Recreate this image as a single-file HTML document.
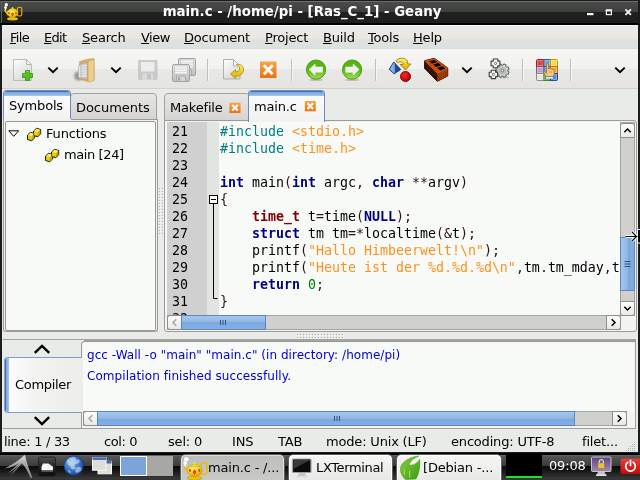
<!DOCTYPE html>
<html><head><meta charset="utf-8"><title>main.c - /home/pi - [Ras_C_1] - Geany</title>
<style>
*{box-sizing:border-box;margin:0;padding:0}
html,body{width:640px;height:480px;overflow:hidden;background:#1c1c1c}
body{position:relative;font-family:"DejaVu Sans","Liberation Sans",sans-serif;font-size:13px;color:#000;line-height:16px}
#root{position:absolute;left:0;top:0;width:640px;height:480px;will-change:transform;overflow:hidden;background:#1c1c1c}
.abs,#root div,#root span.p,#root svg{position:absolute}
.ui{white-space:pre;letter-spacing:-0.18px}
#title{left:0;top:0;width:640px;height:25px;background:linear-gradient(#1c1c1c 0,#1c1c1c 1px,#6c6e6c 1px,#6c6e6c 2px,#4b4d4b 2px,#3d3f3d 12px,#202020 12px,#1e1e1e 23px,#000 23px)}
#title .t{left:0;width:604px;top:4px;text-align:center;color:#fff;font-weight:bold;white-space:pre;font-size:13.333px}
#win{left:2px;top:25px;width:636px;height:427px;background:#e9ebe8}
#menubar{left:2px;top:25px;width:636px;height:24px;background:linear-gradient(#f7f7f7 0,#f7f7f7 1px,#e9e9e9 1px,#e9e9e9 7px,#ebe8e2 8px,#ebe5e1 14px,#dfe3df 14px,#dde1dd 23px,#d8dbd7 24px)}
#menubar span{position:absolute;top:5px}
u{text-decoration:underline;text-underline-offset:1px}
#toolbar{left:2px;top:49px;width:636px;height:40px;background:linear-gradient(#f6f6f5 0,#f1f1ef 20px,#e8e8e6 20px,#e6e4e1 39px,#d2d1ce 39px)}
.mono{font-family:"DejaVu Sans Mono","Liberation Mono",monospace;font-size:13.29px;white-space:pre}
.ln{left:0;width:480px;height:17px;line-height:17px}
.ln i{position:absolute;left:6px;font-style:normal;color:#000}
.ln b{font-weight:bold}
.ln s{position:absolute;left:54px;text-decoration:none}
.pp{color:#007f7f}.st{color:#ff901e}.kw{color:#00007f;font-weight:bold}.ty{color:#7f0000;font-weight:bold}.nu{color:#007f00}.br{color:#301010}
#status span{position:absolute;top:3px}
</style></head><body><div id="root">
<div id="title"><div class="t">main.c - /home/pi - [Ras_C_1] - Geany</div></div>
<div style="left:1px;top:1px;width:1px;height:22px;background:#5e605e"></div><div style="left:638px;top:0;width:2px;height:24px;background:#1a1a1a"></div><div id="win"></div>
<div id="menubar" class="ui"><span style="left:8px;letter-spacing:-0.7px"><u>F</u>ile</span><span style="left:42px;letter-spacing:-0.7px"><u>E</u>dit</span><span style="left:80px"><u>S</u>earch</span><span style="left:139px;letter-spacing:-0.5px"><u>V</u>iew</span><span style="left:182px"><u>D</u>ocument</span><span style="left:263px"><u>P</u>roject</span><span style="left:321px"><u>B</u>uild</span><span style="left:366px"><u>T</u>ools</span><span style="left:411px"><u>H</u>elp</span></div>
<div id="toolbar"></div>
<svg style="left:0;top:49px" width="640" height="40" viewBox="0 49 640 40">
<defs>
<linearGradient id="gpage" x1="0" y1="0" x2="0.6" y2="1"><stop offset="0" stop-color="#fefefe"/><stop offset="1" stop-color="#d8d8d8"/></linearGradient>
<linearGradient id="gor" x1="0" y1="0" x2="0" y2="1"><stop offset="0" stop-color="#f9a64a"/><stop offset="1" stop-color="#ef6f0c"/></linearGradient>
<linearGradient id="ggr" x1="0" y1="0" x2="0" y2="1"><stop offset="0" stop-color="#58b012"/><stop offset="0.55" stop-color="#5cba14"/><stop offset="1" stop-color="#a6de5a"/></linearGradient>
<linearGradient id="gfl" x1="0" y1="0" x2="0" y2="1"><stop offset="0" stop-color="#ececec"/><stop offset="1" stop-color="#bdbdbd"/></linearGradient>
<radialGradient id="gred" cx="0.4" cy="0.35" r="0.7"><stop offset="0" stop-color="#f82828"/><stop offset="1" stop-color="#b00004"/></radialGradient>
<linearGradient id="gyl" x1="0" y1="0" x2="0" y2="1"><stop offset="0" stop-color="#fff06a"/><stop offset="1" stop-color="#d8a800"/></linearGradient>
<filter id="blur1" x="-50%" y="-50%" width="200%" height="200%"><feGaussianBlur stdDeviation="0.9"/></filter><g id="chev"><polyline points="0.3,0.6 5,5.2 9.700,0.600" fill="none" stroke="#000" stroke-width="2" stroke-linecap="butt" stroke-linejoin="miter"/></g>
<g id="arrc"><ellipse cx="0" cy="10.3" rx="7" ry="1.2" fill="#000" opacity="0.18"/><circle cx="0" cy="0" r="9.6" fill="url(#ggr)" stroke="#4a9c10" stroke-width="1"/><path d="M-7,0 L-1,-5.6 V-2.6 H6.4 V2.6 H-1 V5.6 Z" fill="#f0f0ee" stroke="#fff" stroke-width="0.5" stroke-linejoin="round"/></g>
<g id="floppy"><rect x="0.5" y="0.5" width="17" height="17" rx="1.5" fill="url(#gfl)" stroke="#a2a2a2"/><rect x="2.5" y="2" width="13" height="8" fill="#f4f4f4" stroke="#b5b5b5" stroke-width="0.6"/><path d="M3,5h12M3,7.5h12" stroke="#cfcfcf" stroke-width="0.7"/><rect x="4.5" y="12" width="9" height="5.5" fill="#d6d6d6" stroke="#9a9a9a" stroke-width="0.7"/><rect x="6" y="13.3" width="2.2" height="3.4" fill="#a4a4a4"/></g>
</defs>
<!-- new -->
<path d="M13.500,59.500h13l5,5v16h-18z" fill="url(#gpage)" stroke="#bcbcbc"/>
<path d="M26.500,59.500v5h5z" fill="#f6f6f6" stroke="#b4b4b4" stroke-linejoin="round"/>
<path d="M25.500,70.500h4v3h3v4h-3v3h-4v-3h-3v-4h3z" fill="#56bc26" stroke="#40a018" stroke-width="1"/>
<path d="M26.500,71.500h2M23.500,74.500h2" stroke="#8edc60" stroke-width="1"/>
<use href="#chev" x="48" y="67"/>
<!-- open folder -->
<ellipse cx="78.500" cy="76" rx="4.300" ry="4.500" fill="#5c5c5c" opacity="0.600" filter="url(#blur1)"/>
<path d="M79.500,61.500l8,-2.300l6.500,-0.700v21.500l-6.500,1.500l-8,-2.500z" fill="#d6b062" stroke="#c09a4c" stroke-width="0.500"/>
<path d="M79.800,64.300l7.700,-1.900v17l-7.700,-1.800z" fill="#cdcdcd" stroke="#9c9c9c" stroke-width="0.600"/>
<path d="M81.200,66.400l5.300,-1M81.200,68.900l5.300,-1M81.200,71.400l5.300,-1M81.200,73.900l5.300,-1M81.200,76.400l5.300,-1" stroke="#f2f2f2" stroke-width="0.900"/>
<path d="M78.500,65.800l2.300,-0.400v12.600l-2.300,-0.500z" fill="#e4e4e4" stroke="#a8a8a8" stroke-width="0.500"/>
<path d="M88,61.500l6,-2.500v21.500l-6,1.500z" fill="#ecd08c" stroke="#cfa654" stroke-width="0.800"/>
<use href="#chev" x="111" y="67"/>
<!-- save disabled -->
<g opacity="0.9"><rect x="138" y="60" width="19.500" height="20" rx="1" fill="#c6c6c6"/><rect x="141" y="62" width="13.500" height="9.500" fill="#ededed"/><rect x="142.500" y="73.500" width="10.500" height="6.500" fill="#dadada"/><rect x="147" y="74" width="4" height="5.500" fill="#c2c2c2"/></g>
<!-- save all -->
<use href="#floppy" x="178" y="58"/><use href="#floppy" x="172" y="64"/>
<path d="M207.500,59v22M291.500,59v22M375.500,59v22M522.500,59v22M570.500,59v22" stroke="#c1c0be" stroke-width="1"/>
<path d="M208.500,59v22M292.500,59v22M376.500,59v22M523.500,59v22M571.500,59v22" stroke="#f6f6f5" stroke-width="1"/>
<!-- revert -->
<path d="M223.500,59.500h10l6.500,6.500v13h-16.500z" fill="url(#gpage)" stroke="#b0b0b0"/>
<path d="M233.500,59.500v6.500h6.500z" fill="#f3f3f3" stroke="#b4b4b4" stroke-linejoin="round"/>
<path d="M236.500,64.500c5,-1 8.500,3 6.500,7.500c-1.500,3.500 -5,4.500 -7.500,4.300v2.200l-5,-4.500l5,-4.500v2.500c2,0 3.500,-0.800 4,-2.500c0.500,-2 -1,-4 -3,-5z" fill="url(#gyl)" stroke="#b08a00" stroke-width="0.8" stroke-linejoin="round"/>
<!-- close -->
<rect x="260" y="61.500" width="16.500" height="16.500" fill="url(#gor)"/>
<path d="M263.800,65.300l8.900,8.900M272.700,65.300l-8.900,8.900" stroke="#fff" stroke-width="2.900" stroke-linecap="butt"/>
<!-- back / forward -->
<use href="#arrc" x="316.100" y="69.600"/>
<use href="#arrc" transform="translate(352.100 69.600) scale(-1 1)"/>
<!-- compile -->
<path d="M393.800,62L400.700,69.500L394.200,73.800L389.200,69.300z" fill="#1c4c98" stroke="#183878" stroke-width="1" stroke-linejoin="round"/>
<path d="M393.800,62.600L394,73.200L389.800,69.300z" fill="#8ab4e4"/>
<path d="M394.400,63l0.200,10" stroke="#dce8f8" stroke-width="0.500"/>
<path d="M396,60.800C398,57.600 405.500,56.800 407.500,61.200L407.800,64L411,64L405.500,70L400,64.500L403.300,64.500C403,61.800 399.800,61 397.600,62.800z" fill="url(#gyl)" stroke="#a08000" stroke-width="0.900" stroke-linejoin="round"/>
<circle cx="405.500" cy="76.500" r="5" fill="url(#gred)" stroke="#8c0000" stroke-width="1"/>
<!-- brick -->
<path d="M424.700,60.700L434.300,58.300L447.700,68L447.700,76L437.300,81.300L424.700,68.300z" fill="#5a1c02" stroke="#1c0800" stroke-width="1" stroke-linejoin="round"/>
<path d="M424.700,60.700L434.300,58.300L447.700,68L437.300,73.300z" fill="#c64c0c"/>
<path d="M424.700,60.700L437.300,73.300L437.300,81.300L424.700,68.300z" fill="#2e0c00"/>
<path d="M437.300,73.300L447.700,68L447.700,76L437.300,81.300z" fill="#a03c0c"/>
<path d="M426,64l10.500,10.500M426,66.500l9,9.500" stroke="#8c3006" stroke-width="0.900" opacity="0.800" stroke-dasharray="1.500 1"/>
<path d="M438.500,76.500l8,-4M439,79l8,-4" stroke="#5a1c02" stroke-width="0.900" opacity="0.700" stroke-dasharray="1.200 1.300"/>
<g fill="#080100"><path d="M429.200,61.300l5,-1.400l2.800,2.200l-5,1.600z"/><path d="M433.200,64.500l5,-1.500l3,2.300l-5,1.700z"/><path d="M437.300,67.800l5,-1.500l3,2.300l-5,1.800z"/></g>
<path d="M424.700,60.700L437.300,73.300L447.700,68" fill="none" stroke="#e06c24" stroke-width="0.700"/>
<use href="#chev" x="462" y="67"/>
<!-- gears -->
<ellipse cx="504" cy="77.500" rx="5" ry="1.200" fill="#000" opacity="0.150"/>
<path d="M507.76,71.23L509.17,71.95L508.14,74.43L506.64,73.94L505.74,74.84L506.23,76.34L503.75,77.37L503.03,75.96L501.77,75.96L501.05,77.37L498.57,76.34L499.06,74.84L498.16,73.94L496.66,74.43L495.63,71.95L497.04,71.23L497.04,69.97L495.63,69.25L496.66,66.77L498.16,67.26L499.06,66.36L498.57,64.86L501.05,63.83L501.77,65.24L503.03,65.24L503.75,63.83L506.23,64.86L505.74,66.36L506.64,67.26L508.14,66.77L509.17,69.25L507.76,69.97z" fill="#d2d6d2" stroke="#4e524e" stroke-width="0.900" stroke-linejoin="round"/>
<circle cx="502.400" cy="70.600" r="3.300" fill="#c0c4c0" stroke="#9a9e9a" stroke-width="0.600"/><circle cx="502.400" cy="70.600" r="1.300" fill="#fff" stroke="#4e524e" stroke-width="0.800"/>
<path d="M493.2,59.0h4.6v2.1000000000000005h2.1000000000000005v4.6h-2.1000000000000005v2.1000000000000005h-4.6v-2.1000000000000005h-2.1000000000000005v-4.6h2.1000000000000005z" fill="#f6f6f6" stroke="#3c403c" stroke-width="1.100" stroke-linejoin="round"/>
<circle cx="495.500" cy="63.400" r="1.100" fill="#fff" stroke="#4e524e" stroke-width="0.800"/>
<path d="M491.2,70.2h4.4v2.0h2.0v4.4h-2.0v2.0h-4.4v-2.0h-2.0v-4.4h2.0z" fill="#f6f6f6" stroke="#3c403c" stroke-width="1.100" stroke-linejoin="round"/>
<circle cx="493.400" cy="74.400" r="1.100" fill="#fff" stroke="#4e524e" stroke-width="0.800"/>
<!-- color chooser -->
<clipPath id="ccl"><rect x="536" y="59" width="22" height="22" rx="2.500"/></clipPath>
<g clip-path="url(#ccl)"><rect x="536.5" y="59.5" width="7.5" height="7" fill="#e04444" stroke="#a01c1c" stroke-width="1"/><rect x="537.5" y="60.5" width="5.5" height="5" fill="none" stroke="#fff" stroke-width="0.800" opacity="0.350"/><rect x="544" y="59.5" width="6.5" height="7" fill="#6c9eda" stroke="#2c5c9c" stroke-width="1"/><rect x="545" y="60.5" width="4.5" height="5" fill="none" stroke="#fff" stroke-width="0.800" opacity="0.350"/><rect x="550.5" y="59.5" width="7" height="7" fill="#f4dc40" stroke="#b89a10" stroke-width="1"/><rect x="551.5" y="60.5" width="5" height="5" fill="none" stroke="#fff" stroke-width="0.800" opacity="0.350"/><rect x="536.5" y="66.5" width="7.5" height="7" fill="#c49cc4" stroke="#80508c" stroke-width="1"/><rect x="537.5" y="67.5" width="5.5" height="5" fill="none" stroke="#fff" stroke-width="0.800" opacity="0.350"/><rect x="544" y="66.5" width="6.5" height="7" fill="#5c92d6" stroke="#2c5c9c" stroke-width="1"/><rect x="545" y="67.5" width="4.5" height="5" fill="none" stroke="#fff" stroke-width="0.800" opacity="0.350"/><rect x="550.5" y="66.5" width="7" height="7" fill="#f4a048" stroke="#c87010" stroke-width="1"/><rect x="551.5" y="67.5" width="5" height="5" fill="none" stroke="#fff" stroke-width="0.800" opacity="0.350"/><rect x="536.5" y="73.5" width="7.5" height="7" fill="#e4e8e0" stroke="#8a8c86" stroke-width="1"/><rect x="537.5" y="74.5" width="5.5" height="5" fill="none" stroke="#fff" stroke-width="0.800" opacity="0.350"/><rect x="544" y="73.5" width="6.5" height="7" fill="#78d040" stroke="#3c9010" stroke-width="1"/><rect x="545" y="74.5" width="4.5" height="5" fill="none" stroke="#fff" stroke-width="0.800" opacity="0.350"/><rect x="550.5" y="73.5" width="7" height="7" fill="#5a90d4" stroke="#204c8c" stroke-width="1"/><rect x="551.5" y="74.5" width="5" height="5" fill="none" stroke="#fff" stroke-width="0.800" opacity="0.350"/></g>
<path d="M546.600,64.800c0,-1.500 2,-1.500 2,0v4.200l0.800,-0.500c0.600,-0.300 1.200,0 1.300,0.500l0.700,-0.200c0.600,-0.200 1.100,0.200 1.200,0.700l0.500,-0.100c0.700,0 1.100,0.500 1.100,1.100v3c0,2 -1,3.200 -2.400,3.400h-4.400c-1.500,-0.400 -2.800,-2.400 -3.500,-4.200c-0.300,-1 0.900,-1.500 1.500,-0.700l1.200,1.300z" fill="#f4c888" stroke="#b47414" stroke-width="0.900" stroke-linejoin="round"/>
<path d="M549.800,70.500v2.500M551.600,70.800v2.300" stroke="#c88c34" stroke-width="0.600"/>
<rect x="545.500" y="76.800" width="8" height="2.200" fill="#fbfbf8" stroke="#2c5c9c" stroke-width="0.600"/>
<use href="#chev" x="615" y="67"/>
</svg>
<!-- sidebar notebook -->
<div style="left:70px;top:93px;width:87px;height:27px;background:linear-gradient(#e7e6e4,#d5d4d2);border:1px solid #a3a2a0;border-radius:4px 4px 0 0"></div>
<div style="left:3px;top:90px;width:68px;height:32px;background:linear-gradient(#fcfcfc,#f1f1f0);border:1px solid #6c8cbc;border-bottom:none;border-radius:4px 4px 0 0;overflow:hidden"><div style="left:0;top:0;width:68px;height:5px;background:linear-gradient(#76a2dc,#a4c4ea);border-top:1px solid #4872b0"></div></div>
<div style="left:3px;top:119px;width:155px;height:213px;border:1px solid #9c9b99;border-top:none;background:#f1f1f0;border-radius:0 0 3px 3px"></div>
<div style="left:71px;top:119px;width:87px;height:1px;background:#9c9b99"></div>
<span class="p ui" style="left:9px;top:98px">Symbols</span>
<span class="p ui" style="left:76px;top:100px;letter-spacing:-0.05px">Documents</span>
<div style="left:5px;top:121px;width:151px;height:210px;border:1px solid #9a9997;background:#f8faf8;border-radius:2px"></div>
<svg style="left:0;top:120px" width="160" height="50" viewBox="0 120 160 50">
<path d="M8.800,130.800h9.800l-4.900,5.500z" fill="#fff" stroke="#000" stroke-width="1" stroke-linejoin="round"/>
<g id="cubes" transform="translate(0 0.600)"><path d="M27.500,134.500l3,-2.800l4.200,1.200v4.400l-3,2.800l-4.200,-1.200z" fill="#e6c81c" stroke="#1a1400" stroke-width="1" stroke-linejoin="round"/><path d="M33.500,130.500l3,-2.800l4.200,1.200v4.400l-3,2.800l-4.200,-1.200z" fill="#e6c81c" stroke="#1a1400" stroke-width="1" stroke-linejoin="round"/><path d="M28.200,134.400l2.500,-2.200l3.500,1l-2.500,2.200zM34.200,130.400l2.500,-2.200l3.500,1l-2.500,2.200z" fill="#faec70"/><path d="M32,135.800l2.200,-2v3.300l-2.200,2zM38,131.800l2.200,-2v3.300l-2.200,2z" fill="#c8a810"/></g>
<use href="#cubes" x="18" y="21"/>
</svg>
<span class="p ui" style="left:46px;top:126px">Functions</span>
<span class="p ui" style="left:64px;top:147px;letter-spacing:-0.4px">main [24]</span>
<!-- pane handle -->
<svg style="left:158px;top:188px" width="7" height="49" viewBox="0 0 7 49"><g fill="#aeaeaa"><rect x="1" y="0" width="1" height="1"/><rect x="4" y="0" width="1" height="1"/><rect x="1" y="3" width="1" height="1"/><rect x="4" y="3" width="1" height="1"/><rect x="1" y="6" width="1" height="1"/><rect x="4" y="6" width="1" height="1"/><rect x="1" y="9" width="1" height="1"/><rect x="4" y="9" width="1" height="1"/><rect x="1" y="12" width="1" height="1"/><rect x="4" y="12" width="1" height="1"/><rect x="1" y="15" width="1" height="1"/><rect x="4" y="15" width="1" height="1"/><rect x="1" y="18" width="1" height="1"/><rect x="4" y="18" width="1" height="1"/><rect x="1" y="21" width="1" height="1"/><rect x="4" y="21" width="1" height="1"/><rect x="1" y="24" width="1" height="1"/><rect x="4" y="24" width="1" height="1"/><rect x="1" y="27" width="1" height="1"/><rect x="4" y="27" width="1" height="1"/><rect x="1" y="30" width="1" height="1"/><rect x="4" y="30" width="1" height="1"/><rect x="1" y="33" width="1" height="1"/><rect x="4" y="33" width="1" height="1"/><rect x="1" y="36" width="1" height="1"/><rect x="4" y="36" width="1" height="1"/><rect x="1" y="39" width="1" height="1"/><rect x="4" y="39" width="1" height="1"/><rect x="1" y="42" width="1" height="1"/><rect x="4" y="42" width="1" height="1"/><rect x="1" y="45" width="1" height="1"/><rect x="4" y="45" width="1" height="1"/></g><g fill="#f8f8f8"><rect x="2" y="1" width="1" height="1"/><rect x="5" y="1" width="1" height="1"/><rect x="2" y="4" width="1" height="1"/><rect x="5" y="4" width="1" height="1"/><rect x="2" y="7" width="1" height="1"/><rect x="5" y="7" width="1" height="1"/><rect x="2" y="10" width="1" height="1"/><rect x="5" y="10" width="1" height="1"/><rect x="2" y="13" width="1" height="1"/><rect x="5" y="13" width="1" height="1"/><rect x="2" y="16" width="1" height="1"/><rect x="5" y="16" width="1" height="1"/><rect x="2" y="19" width="1" height="1"/><rect x="5" y="19" width="1" height="1"/><rect x="2" y="22" width="1" height="1"/><rect x="5" y="22" width="1" height="1"/><rect x="2" y="25" width="1" height="1"/><rect x="5" y="25" width="1" height="1"/><rect x="2" y="28" width="1" height="1"/><rect x="5" y="28" width="1" height="1"/><rect x="2" y="31" width="1" height="1"/><rect x="5" y="31" width="1" height="1"/><rect x="2" y="34" width="1" height="1"/><rect x="5" y="34" width="1" height="1"/><rect x="2" y="37" width="1" height="1"/><rect x="5" y="37" width="1" height="1"/><rect x="2" y="40" width="1" height="1"/><rect x="5" y="40" width="1" height="1"/><rect x="2" y="43" width="1" height="1"/><rect x="5" y="43" width="1" height="1"/><rect x="2" y="46" width="1" height="1"/><rect x="5" y="46" width="1" height="1"/></g></svg>
<!-- editor notebook -->
<div style="left:164px;top:93px;width:86px;height:28px;background:linear-gradient(#e7e6e4,#d5d4d2);border:1px solid #a3a2a0;border-radius:4px 4px 0 0"></div>
<div style="left:164px;top:120px;width:473px;height:212px;border:1px solid #9c9b99;background:#f3f3f2;border-radius:0 3px 3px 3px"></div>
<div style="left:248px;top:90px;width:77px;height:32px;background:linear-gradient(#fcfcfc,#f1f1f0);border:1px solid #6c8cbc;border-bottom:none;border-radius:4px 4px 0 0;overflow:hidden"><div style="left:0;top:0;width:77px;height:5px;background:linear-gradient(#76a2dc,#a4c4ea);border-top:1px solid #4872b0"></div></div>
<span class="p ui" style="left:170px;top:100px">Makefile</span>
<span class="p ui" style="left:254px;top:99px">main.c</span>
<svg style="left:225px;top:98px" width="100" height="20" viewBox="225 98 100 20">
<g id="tclose"><rect x="229.500" y="102.700" width="11" height="10.300" fill="url(#gor)"/><path d="M232.200,105l5.600,5.600M237.800,105l-5.600,5.600" stroke="#fff" stroke-width="2.100"/></g>
<use href="#tclose" x="75.300" y="-1.700"/>
</svg>
<!-- editor -->
<div id="editor" style="left:166px;top:122px;width:454px;height:193px;background:#f8faf8;overflow:hidden">
<div style="left:1px;top:0;width:40px;height:193px;background:#d0d0d0"></div>
<div style="left:41px;top:0;width:12px;height:193px;background:#e2e4e2"></div>
<div id="code" class="mono" style="left:0;top:1px;width:454px;height:192px">
<div class="ln" style="top:0"><i>21</i><s><span class="pp">#include </span><span class="st">&lt;stdio.h&gt;</span></s></div>
<div class="ln" style="top:17px"><i>22</i><s><span class="pp">#include </span><span class="st">&lt;time.h&gt;</span></s></div>
<div class="ln" style="top:34px"><i>23</i><s></s></div>
<div class="ln" style="top:51px"><i>24</i><s><span class="kw">int</span> main<span class="br">(</span><span class="kw">int</span> argc<span class="br">,</span> <span class="kw">char</span> <span class="br">**</span>argv<span class="br">)</span></s></div>
<div class="ln" style="top:68px"><i>25</i><s><span class="br">{</span></s></div>
<div class="ln" style="top:85px"><i>26</i><s>    <span class="ty">time_t</span> t<span class="br">=</span>time<span class="br">(</span><span class="kw">NULL</span><span class="br">);</span></s></div>
<div class="ln" style="top:102px"><i>27</i><s>    <span class="kw">struct</span> tm tm<span class="br">=*</span>localtime<span class="br">(&amp;</span>t<span class="br">);</span></s></div>
<div class="ln" style="top:119px"><i>28</i><s>    printf<span class="br">(</span><span class="st">"Hallo Himbeerwelt!\n"</span><span class="br">);</span></s></div>
<div class="ln" style="top:136px"><i>29</i><s>    printf<span class="br">(</span><span class="st">"Heute ist der %d.%d.%d\n"</span><span class="br">,</span>tm<span class="br">.</span>tm_mday<span class="br">,</span>tm<span class="br">.</span>tm_mon<span class="br">+</span>1<span class="br">,</span></s></div>
<div class="ln" style="top:153px"><i>30</i><s>    <span class="kw">return</span> <span class="nu">0</span><span class="br">;</span></s></div>
<div class="ln" style="top:170px"><i>31</i><s><span class="br">}</span></s></div>
<div class="ln" style="top:187px"><i>32</i><s></s></div>
</div>
<svg style="left:41px;top:0" width="14" height="193" viewBox="207 122 14 193"><path d="M213.500,204v94.500h4" fill="none" stroke="#000" stroke-width="1"/><rect x="209.500" y="195.500" width="8" height="8" fill="#fff" stroke="#000"/><path d="M211,199.500h5" stroke="#000"/></svg>
</div>
<!-- v scrollbar -->
<div style="left:620px;top:122px;width:15px;height:194px;background:#d0d1cf;border:1px solid #a3a3a1"></div>
<div style="left:620px;top:123px;width:15px;height:15px;background:linear-gradient(#fdfdfd,#e9e9e7);border:1px solid #8f8f8d;border-radius:3px 3px 0 0"></div>
<div style="left:620px;top:301px;width:15px;height:15px;background:linear-gradient(#fdfdfd,#e9e9e7);border:1px solid #8f8f8d;border-radius:0 0 3px 3px"></div>
<div style="left:620px;top:237px;width:15px;height:54px;background:linear-gradient(90deg,#a6c6ec 0,#90b6e4 50%,#7ca8de 50%,#84aee2 100%);border:1px solid #5a86c4"></div>
<!-- h scrollbar -->
<div style="left:167px;top:315px;width:454px;height:15px;background:#d0d1cf;border:1px solid #a3a3a1"></div>
<div style="left:167px;top:315px;width:15px;height:15px;background:linear-gradient(#fdfdfd,#e9e9e7);border:1px solid #8f8f8d;border-radius:3px 0 0 3px"></div>
<div style="left:606px;top:315px;width:15px;height:15px;background:linear-gradient(#fdfdfd,#e9e9e7);border:1px solid #8f8f8d;border-radius:0 3px 3px 0"></div>
<div style="left:181px;top:315px;width:85px;height:15px;background:linear-gradient(#a6c6ec 0,#90b6e4 50%,#7ca8de 50%,#84aee2 100%);border:1px solid #5a86c4"></div>
<svg style="left:160px;top:120px" width="480" height="215" viewBox="160 120 480 215">
<polyline points="624.300,132.300 627.500,129 630.700,132.300" fill="none" stroke="#000" stroke-width="1.500"/>
<polyline points="624.300,306.700 627.500,310 630.700,306.700" fill="none" stroke="#000" stroke-width="1.500"/>
<polyline points="611.700,319.300 615,322.500 611.700,325.700" fill="none" stroke="#000" stroke-width="1.500"/>
<polyline points="176.300,319.300 173,322.500 176.300,325.700" fill="none" stroke="#a8a8a6" stroke-width="1.600"/>
<path d="M624.500,261.500h6M624.500,264h6M624.500,266.500h6" stroke="#34527e" stroke-width="1"/>
<path d="M220.500,320v5M223,320v5M225.500,320v5" stroke="#34527e" stroke-width="1"/>
<path d="M625.500,236.500h11M632,232l4.500,4.500l-4.500,4.500" fill="none" stroke="#fff" stroke-width="3"/><rect x="637.500" y="229.500" width="4" height="13.500" fill="#000" stroke="#fff" stroke-width="1"/><path d="M625.500,236.500h12M632,232l4.500,4.500l-4.500,4.500" fill="none" stroke="#000" stroke-width="1.100"/>
</svg>
<!-- message window -->
<div style="left:3px;top:339px;width:633px;height:90px;border:1px solid #a09f9d;border-top:1px solid #a3a29f;border-left:none;background:#e9ebe8"></div><div style="left:84px;top:340px;width:551px;height:1px;background:#a4a29e"></div>
<div style="left:4px;top:357px;width:78px;height:56px;background:linear-gradient(90deg,#fdfdfd,#f1f1f0 50%,#ededec);border:1px solid #7f9cc4;border-right:none;border-radius:4px 0 0 4px;overflow:hidden"><div style="left:0;top:0;width:4px;height:56px;background:linear-gradient(90deg,#76a2dc,#a4c4ea);border-left:1px solid #4872b0"></div></div>
<span class="p ui" style="left:15px;top:377px;letter-spacing:-0.3px">Compiler</span>
<div style="left:81px;top:341px;width:554px;height:87px;background:#f3f3f2;border:1px solid #9c9b99;border-right:none;border-bottom:none;border-radius:4px 0 0 0"></div>
<div style="left:83px;top:343px;width:551px;height:69px;background:#f8faf8"></div>
<div style="left:80px;top:358px;width:3px;height:54px;background:#ededec"></div><span class="p ui" style="left:87px;top:347px;color:#0000d0;font-size:12px;letter-spacing:0.04px">gcc -Wall -o "main" "main.c" (in directory: /home/pi)</span>
<span class="p ui" style="left:87px;top:368px;color:#0000d0;font-size:12px;letter-spacing:0.07px">Compilation finished successfully.</span>
<div style="left:83px;top:411px;width:544px;height:15px;background:#d0d1cf;border:1px solid #a3a3a1"></div>
<div style="left:83px;top:411px;width:15px;height:15px;background:linear-gradient(#fdfdfd,#e9e9e7);border:1px solid #8f8f8d;border-radius:3px 0 0 3px"></div>
<div style="left:612px;top:411px;width:15px;height:15px;background:linear-gradient(#fdfdfd,#e9e9e7);border:1px solid #8f8f8d;border-radius:0 3px 3px 0"></div>
<div style="left:97px;top:411px;width:478px;height:15px;background:linear-gradient(#a6c6ec 0,#90b6e4 50%,#7ca8de 50%,#84aee2 100%);border:1px solid #5a86c4"></div>
<svg style="left:0;top:336px" width="640" height="120" viewBox="0 336 640 120">
<polyline points="34.800,352.900 42,345.900 49.200,352.900" fill="none" stroke="#000" stroke-width="2.400"/>
<polyline points="34.800,417.100 42,424.100 49.200,417.100" fill="none" stroke="#000" stroke-width="2.400"/>
<polyline points="92.300,415.300 89,418.500 92.300,421.700" fill="none" stroke="#a8a8a6" stroke-width="1.600"/>
<polyline points="617.700,415.300 621,418.500 617.700,421.700" fill="none" stroke="#000" stroke-width="1.500"/>
<path d="M334.500,416v5M337,416v5M339.500,416v5" stroke="#34527e" stroke-width="1"/>
<g fill="#b0afad"><rect x="634" y="442" width="1" height="1"/><rect x="632" y="444" width="1" height="1"/><rect x="634" y="444" width="1" height="1"/><rect x="630" y="446" width="1" height="1"/><rect x="632" y="446" width="1" height="1"/><rect x="634" y="446" width="1" height="1"/><rect x="628" y="448" width="1" height="1"/><rect x="630" y="448" width="1" height="1"/><rect x="632" y="448" width="1" height="1"/><rect x="634" y="448" width="1" height="1"/><rect x="626" y="450" width="1" height="1"/><rect x="628" y="450" width="1" height="1"/><rect x="630" y="450" width="1" height="1"/><rect x="632" y="450" width="1" height="1"/><rect x="634" y="450" width="1" height="1"/></g>
</svg>
<svg style="left:297px;top:334px" width="49" height="6" viewBox="0 0 49 6"><g fill="#a6a6a2"><rect x="0" y="0" width="1" height="1"/><rect x="0" y="3" width="1" height="1"/><rect x="3" y="0" width="1" height="1"/><rect x="3" y="3" width="1" height="1"/><rect x="6" y="0" width="1" height="1"/><rect x="6" y="3" width="1" height="1"/><rect x="9" y="0" width="1" height="1"/><rect x="9" y="3" width="1" height="1"/><rect x="12" y="0" width="1" height="1"/><rect x="12" y="3" width="1" height="1"/><rect x="15" y="0" width="1" height="1"/><rect x="15" y="3" width="1" height="1"/><rect x="18" y="0" width="1" height="1"/><rect x="18" y="3" width="1" height="1"/><rect x="21" y="0" width="1" height="1"/><rect x="21" y="3" width="1" height="1"/><rect x="24" y="0" width="1" height="1"/><rect x="24" y="3" width="1" height="1"/><rect x="27" y="0" width="1" height="1"/><rect x="27" y="3" width="1" height="1"/><rect x="30" y="0" width="1" height="1"/><rect x="30" y="3" width="1" height="1"/><rect x="33" y="0" width="1" height="1"/><rect x="33" y="3" width="1" height="1"/><rect x="36" y="0" width="1" height="1"/><rect x="36" y="3" width="1" height="1"/><rect x="39" y="0" width="1" height="1"/><rect x="39" y="3" width="1" height="1"/><rect x="42" y="0" width="1" height="1"/><rect x="42" y="3" width="1" height="1"/><rect x="45" y="0" width="1" height="1"/><rect x="45" y="3" width="1" height="1"/></g><g fill="#fafafa"><rect x="1" y="1" width="1" height="1"/><rect x="1" y="4" width="1" height="1"/><rect x="4" y="1" width="1" height="1"/><rect x="4" y="4" width="1" height="1"/><rect x="7" y="1" width="1" height="1"/><rect x="7" y="4" width="1" height="1"/><rect x="10" y="1" width="1" height="1"/><rect x="10" y="4" width="1" height="1"/><rect x="13" y="1" width="1" height="1"/><rect x="13" y="4" width="1" height="1"/><rect x="16" y="1" width="1" height="1"/><rect x="16" y="4" width="1" height="1"/><rect x="19" y="1" width="1" height="1"/><rect x="19" y="4" width="1" height="1"/><rect x="22" y="1" width="1" height="1"/><rect x="22" y="4" width="1" height="1"/><rect x="25" y="1" width="1" height="1"/><rect x="25" y="4" width="1" height="1"/><rect x="28" y="1" width="1" height="1"/><rect x="28" y="4" width="1" height="1"/><rect x="31" y="1" width="1" height="1"/><rect x="31" y="4" width="1" height="1"/><rect x="34" y="1" width="1" height="1"/><rect x="34" y="4" width="1" height="1"/><rect x="37" y="1" width="1" height="1"/><rect x="37" y="4" width="1" height="1"/><rect x="40" y="1" width="1" height="1"/><rect x="40" y="4" width="1" height="1"/><rect x="43" y="1" width="1" height="1"/><rect x="43" y="4" width="1" height="1"/><rect x="46" y="1" width="1" height="1"/><rect x="46" y="4" width="1" height="1"/></g></svg>
<!-- status bar -->
<div id="status" class="ui" style="left:2px;top:431px;width:635px;height:21px"><span style="left:2px;letter-spacing:-0.3px">line: 1 / 33</span><span style="left:102px;letter-spacing:-0.4px">col: 0</span><span style="left:166px">sel: 0</span><span style="left:230px">INS</span><span style="left:276px">TAB</span><span style="left:324px">mode: Unix (LF)</span><span style="left:449px">encoding: UTF-8</span><span style="left:580px">filet...</span></div>
<!-- title bar decorations -->
<svg style="left:0;top:0" width="640" height="25" viewBox="0 0 640 25">
<defs>
<radialGradient id="ggold" cx="0.4" cy="0.3" r="0.8"><stop offset="0" stop-color="#fff27a"/><stop offset="0.6" stop-color="#f2cc10"/><stop offset="1" stop-color="#c89a00"/></radialGradient>
<g id="lamp">
<g fill="#fff" filter="url(#blur3)"><circle cx="2.300" cy="1.700" r="1.700"/><circle cx="1.500" cy="4.400" r="1.300"/><path d="M0.600,5l1.800,0l-0.400,3l-1,0z"/></g>
<path d="M1,7.600L4,11.500" stroke="#e8c010" stroke-width="1.700" stroke-linecap="round"/>
<rect x="13.300" y="4.300" width="4.500" height="8.700" rx="1.800" fill="none" stroke="#e6bc0c" stroke-width="1.100"/>
<ellipse cx="8.500" cy="15.700" rx="5.500" ry="1.500" fill="#eac40c" stroke="#b89000" stroke-width="0.400"/>
<path d="M6,13h5v2.300h-5z" fill="#e2b800"/>
<ellipse cx="8.500" cy="10" rx="5.700" ry="4.200" fill="url(#ggold)" stroke="#c09800" stroke-width="0.400"/>
<path d="M5,7.200c1,-2.300 6,-2.300 7,0z" fill="#f8dc28" stroke="#c09800" stroke-width="0.300"/><circle cx="8.500" cy="4.800" r="0.900" fill="#f8dc28"/>
<path d="M8.500,9.300l1.400,2l-1.400,2l-1.400,-2zM5,8.800l0.900,1.300l-0.900,1.300l-0.900,-1.300zM12,8.800l0.900,1.300l-0.900,1.300l-0.900,-1.300z" fill="#e82020"/>
<circle cx="8.500" cy="11.300" r="0.500" fill="#ff9090"/>
</g>
<filter id="blur3" x="-30%" y="-30%" width="160%" height="160%"><feGaussianBlur stdDeviation="0.3"/></filter>
</defs>
<use href="#lamp" x="4" y="3"/>
<rect x="587" y="13" width="6.500" height="2.200" fill="#f4f4f4"/>
<rect x="606.400" y="10.400" width="5" height="4.200" fill="none" stroke="#f4f4f4" stroke-width="1.200"/><rect x="605.800" y="9.300" width="6.200" height="2" fill="#f4f4f4"/>
<path d="M626.100,10.100l4.100,4.100M630.200,10.100l-4.100,4.100" stroke="#f4f4f4" stroke-width="1.900" stroke-linecap="square"/>
</svg>
<!-- taskbar -->
<div id="task" style="left:0;top:453px;width:640px;height:27px;background:linear-gradient(#000 0,#000 1.500px,#6a6a6a 2px,#565656 3px,#3a3a3a 13px,#0a0a0a 13px,#141414 17px,#3a3a3a 26px,#303030 27px)"></div>
<div style="left:120px;top:456px;width:27px;height:20px;background:#7ba4da;border:1px solid #fff"></div>
<div style="left:147px;top:456px;width:26px;height:20px;background:#a9a7a3"></div>
<div style="left:180px;top:454px;width:105px;height:30px;background:linear-gradient(#bdbdbb,#cbcbc9);border:1px solid #5e5e5c;border-radius:5px;box-shadow:inset 0 0 0 1px #dcdcda"></div>
<div style="left:288px;top:454px;width:105px;height:30px;background:linear-gradient(#f6f6f5,#e6e6e4);border:1px solid #5e5e5c;border-radius:5px;box-shadow:inset 0 0 0 1px #fff"></div>
<div style="left:396px;top:454px;width:106px;height:30px;background:linear-gradient(#f6f6f5,#e6e6e4);border:1px solid #5e5e5c;border-radius:5px;box-shadow:inset 0 0 0 1px #fff"></div>
<span class="p ui" style="left:208px;top:460px">main.c - /...</span>
<span class="p ui" style="left:316px;top:460px;letter-spacing:-0.36px">LXTerminal</span>
<span class="p ui" style="left:423px;top:460px">[Debian -...</span>
<div style="left:506px;top:455px;width:36px;height:23px;background:#000;border-bottom:2px solid #20e020"></div>
<span class="p ui" style="left:549px;top:458px;color:#fff">09:08</span>
<svg style="left:0;top:453px" width="640" height="27" viewBox="0 453 640 27">
<defs>
<radialGradient id="gglobe" cx="0.4" cy="0.35" r="0.75"><stop offset="0" stop-color="#8cb8ec"/><stop offset="0.5" stop-color="#3a74c4"/><stop offset="1" stop-color="#123c84"/></radialGradient>
<linearGradient id="gleaf" x1="0" y1="0" x2="1" y2="1"><stop offset="0" stop-color="#86d040"/><stop offset="1" stop-color="#3e9c12"/></linearGradient>
<linearGradient id="gpur" x1="0" y1="0" x2="0" y2="1"><stop offset="0" stop-color="#5c4480"/><stop offset="1" stop-color="#a088b8"/></linearGradient>
<linearGradient id="gpow" x1="0" y1="0" x2="0" y2="1"><stop offset="0" stop-color="#ec3c3c"/><stop offset="1" stop-color="#c00c0c"/></linearGradient>
</defs>
<!-- lxde logo -->
<defs><linearGradient id="glx" x1="0" y1="0" x2="0" y2="1"><stop offset="0" stop-color="#f0f0f0"/><stop offset="0.35" stop-color="#b8b8b8"/><stop offset="1" stop-color="#8c8c8c"/></linearGradient></defs>
<path d="M24.500,454.800C20.500,459.300 13,464.500 4.500,468.500C10.500,467.600 15.500,465.600 19.300,463L8,473.200C12.500,470.800 16.500,467.500 20.300,464L10.200,475C14.500,471.800 18.500,467.800 21.500,463.200C24.500,465.500 28,471.500 30.700,478.200L32.300,477.600C30,471 26.800,464 25.500,457z" fill="url(#glx)" filter="url(#blur2)" opacity="0.900"/>
<defs><filter id="blur2" x="-20%" y="-20%" width="140%" height="140%"><feGaussianBlur stdDeviation="0.35"/></filter></defs>
<!-- file manager -->
<defs><linearGradient id="gfm" x1="0" y1="0" x2="0" y2="1"><stop offset="0" stop-color="#505050"/><stop offset="0.45" stop-color="#262626"/><stop offset="1" stop-color="#0c0c0c"/></linearGradient></defs>
<rect x="38.500" y="457" width="17" height="19" rx="2" fill="url(#gfm)" stroke="#1a1a1a" stroke-width="0.800"/>
<path d="M41.500,466.800l1.500,-3.300h5.500l4.500,3.300v3.200h-11.500z" fill="#f4f4f4"/><path d="M41.500,470.300h11.500v1.200h-11.500z" fill="#8a8a8a"/>
<!-- globe -->
<circle cx="73.700" cy="465.700" r="9.800" fill="url(#gglobe)" stroke="#0c2c6c" stroke-width="0.600"/>
<g fill="#e4eefa" opacity="0.550" filter="url(#blur2)"><path d="M67,460.500c2,-3 6,-4 8.500,-3c-1,2 1.500,3.200 3.500,2c1.500,2 0,4.500 -3,4.500c-2,0 -2,3 0,4c-2,2.500 -5.500,1.500 -5.500,-1.500c-2.500,-1 -4,-3.500 -3.500,-6z"/><path d="M76.500,467.500c2,-1.500 5,-0.500 5,2c-1,2.500 -3.500,3.500 -6,3c-0.500,-2 0,-3.800 1,-5z"/><path d="M68,470c1.500,0 3,1.500 3,3c-1.500,0 -3,-1.500 -3,-3z"/></g>
<!-- show desktop -->
<rect x="98" y="461.300" width="13.500" height="12.500" fill="#deded8" stroke="#f8f8f8" stroke-width="1"/><rect x="98" y="461" width="13.500" height="2.500" fill="#3c6cb4"/>
<rect x="92.500" y="457.700" width="13.500" height="12.500" fill="#deded8" stroke="#f8f8f8" stroke-width="1"/><rect x="92.500" y="457.400" width="13.500" height="2.500" fill="#3c6cb4"/>
<!-- geany lamp (task) -->
<use href="#lamp" transform="translate(183.200 457) scale(1.340)"/>
<!-- monitor -->
<rect x="292.500" y="459" width="18.500" height="13.500" rx="1" fill="#0c0c0c" stroke="#a0a0a0" stroke-width="1.200"/><path d="M293.500,460l16.500,0l-16.500,9z" fill="#3a3a3a"/><path d="M299,473h6l1.500,3.500h-9z" fill="#c8c8c8"/><rect x="296" y="476.300" width="12" height="1.400" fill="#e0e0e0"/>
<!-- midori leaf -->
<path d="M419,456C412,456.500 404,460 401,466C399.500,470.500 401.500,476 405.500,479.500L416,479C419,473.500 420.500,466 419.700,459.400C417.500,463 413.500,465.600 409,465.200C410,461 414,458 419,456z" fill="url(#gleaf)" stroke="#3a9410" stroke-width="0.500"/>
<path d="M404.300,469.600v5.200M409.600,470.800v6.400" fill="none" stroke="#9cdc64" stroke-width="1.100" stroke-linecap="round"/>
<!-- lock -->
<rect x="591.500" y="457" width="19.500" height="14.500" rx="1" fill="url(#gpur)" stroke="#c8c8c8" stroke-width="1"/><path d="M598,472h6.500l1.500,3h-9.500z" fill="#c4c4c4"/><rect x="596" y="474.500" width="10.500" height="1.500" fill="#e4e4e4"/>
<rect x="598" y="463" width="6.500" height="5.500" fill="#e8c040" stroke="#a07c10" stroke-width="0.500"/><path d="M599.300,463v-1.500c0,-2.600 4,-2.600 4,0v1.500" fill="none" stroke="#d8d8d8" stroke-width="1.200"/>
<!-- power -->
<rect x="620.500" y="458.500" width="20" height="15.500" rx="2" fill="url(#gpow)"/>
<path d="M627.800,462.300a4.800,4.800 0 1 0 5.400,0" fill="none" stroke="#fff" stroke-width="1.700" stroke-linecap="round"/><path d="M630.500,460.300v5.200" stroke="#fff" stroke-width="1.700" stroke-linecap="round"/>
</svg>
</div></body></html>
